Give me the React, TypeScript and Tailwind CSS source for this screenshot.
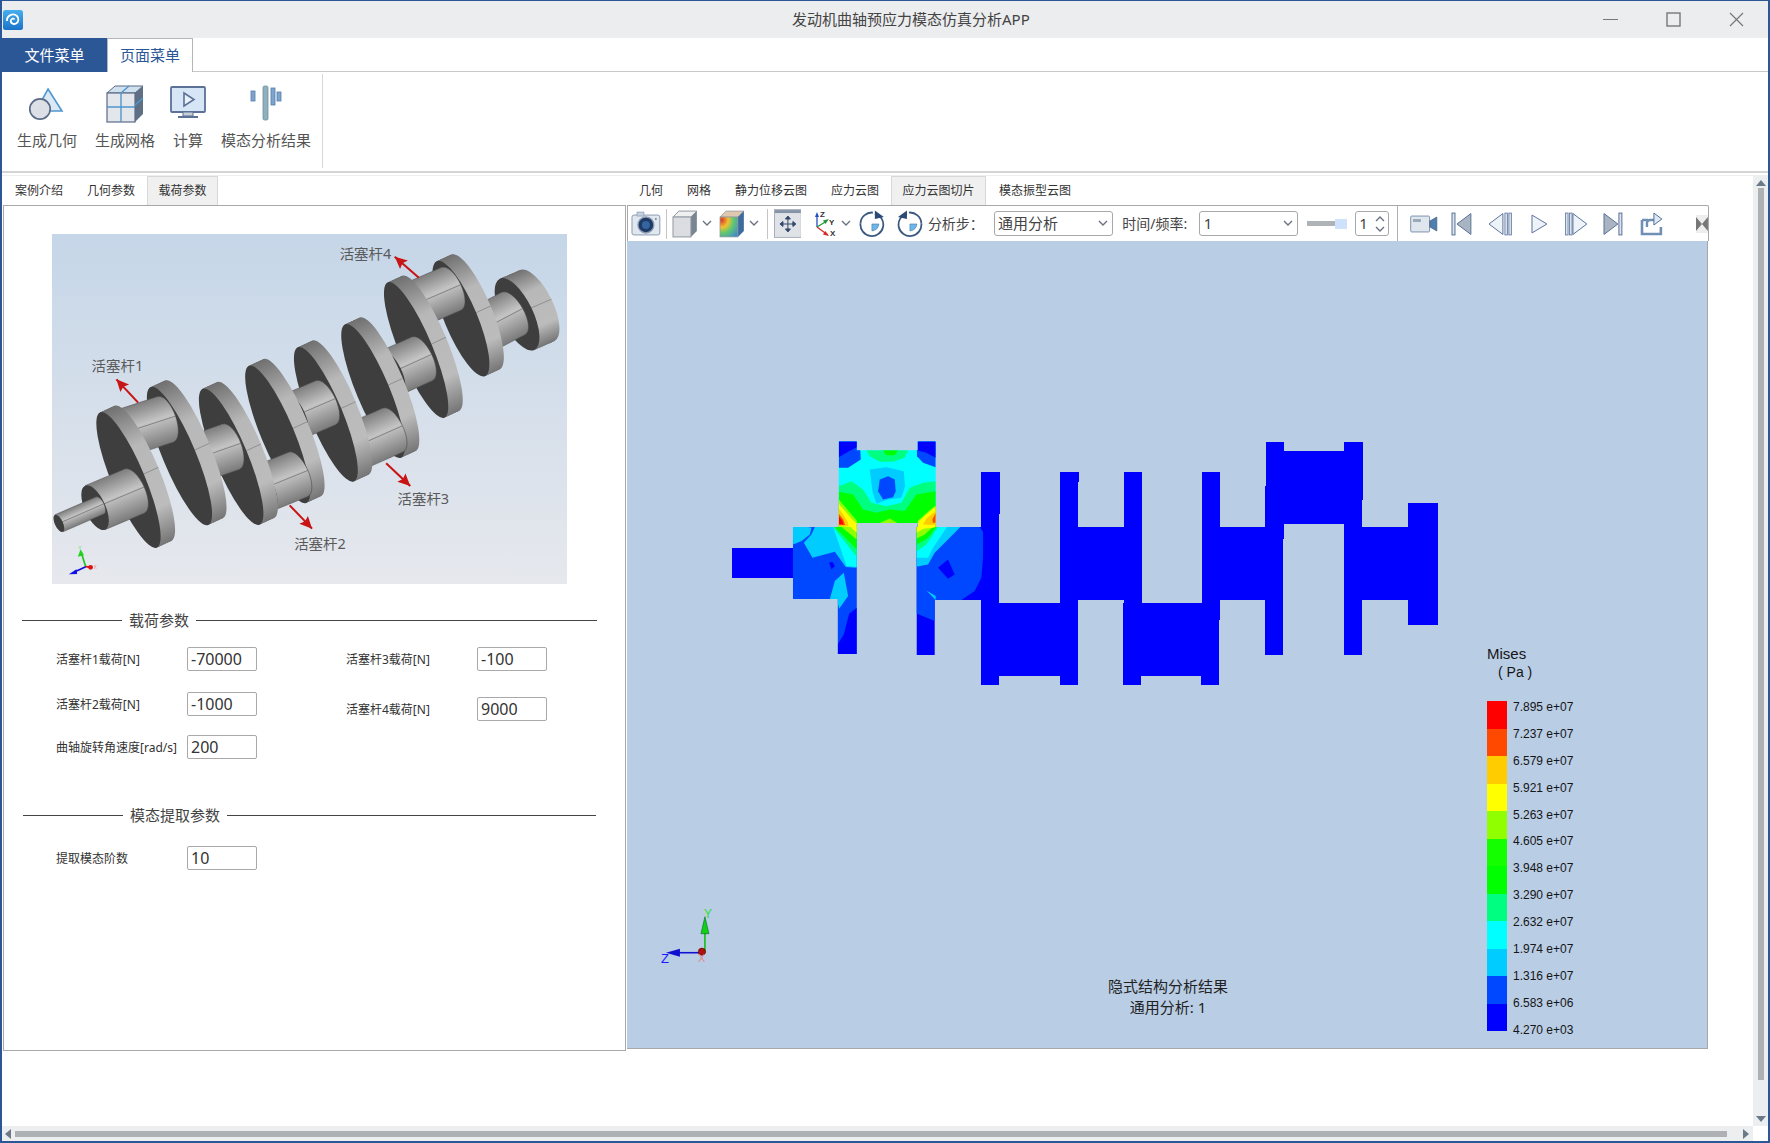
import React from "react";

const cls = "[font-family:'Noto_Sans','Noto_Sans_CJK_SC',sans-serif]";

const Chevron = ({ c = "#6b7380" }: { c?: string }) => (
  <svg width="10" height="7" viewBox="0 0 10 7"><path d="M1 1l4 4 4-4" fill="none" stroke={c} strokeWidth="1.4" /></svg>
);

function Cyl({ a, b, r }: { a: number[]; b: number[]; r: number }) {
  const ang = (Math.atan2(b[1] - a[1], b[0] - a[0]) * 180) / Math.PI;
  const L = Math.hypot(b[0] - a[0], b[1] - a[1]);
  return (
    <g transform={`translate(${a[0]} ${a[1]}) rotate(${ang})`}>
      <ellipse cx={L} cy={0} rx={r * 0.42} ry={r} fill="url(#cyl)" stroke="#444" strokeWidth="1.5" />
      <rect x={0} y={-r} width={L} height={2 * r} fill="url(#cyl)" />
      <line x1={0} y1={-r} x2={L} y2={-r} stroke="#555" strokeWidth="1.5" />
      <line x1={0} y1={r} x2={L} y2={r} stroke="#555" strokeWidth="1.5" />
      <line x1={0} y1={0} x2={L + r * 0.42} y2={0} stroke="#555" strokeWidth="1.5" />
      <ellipse cx={0} cy={0} rx={r * 0.42} ry={r} fill="#3e3e3e" />
    </g>
  );
}

function Disc({ c, maj, min = 48, off = [42, -20], ang = 68 }: { c: number[]; maj: number; min?: number; off?: number[]; ang?: number }) {
  const steps = Array.from({ length: 16 }, (_, i) => (i + 1) / 16).reverse();
  const rad = ((ang - 90) * Math.PI) / 180;
  const sx = c[0] + Math.cos(rad) * min;
  const sy = c[1] + Math.sin(rad) * min;
  return (
    <g>
      {steps.map((t) => (
        <ellipse
          key={t}
          cx={0}
          cy={0}
          rx={maj}
          ry={min}
          fill="url(#band)"
          transform={`translate(${c[0] + off[0] * t} ${c[1] + off[1] * t}) rotate(${ang})`}
        />
      ))}
      <ellipse cx={0} cy={0} rx={maj} ry={min} fill="#3e3e3e" transform={`translate(${c[0]} ${c[1]}) rotate(${ang})`} />
      <line x1={sx} y1={sy} x2={sx + off[0]} y2={sy + off[1]} stroke="#666" strokeWidth="1.5" />
    </g>
  );
}

function Crankshaft() {
  const labels: [string, number, number][] = [
    ["活塞杆1", 150, 435],
    ["活塞杆2", 738, 969],
    ["活塞杆3", 1038, 835],
    ["活塞杆4", 870, 100],
  ];
  const arrows = [
    [285, 530, 222, 460],
    [725, 838, 790, 908],
    [1005, 712, 1075, 780],
    [1100, 155, 1030, 92],
  ];
  return (
    <svg width="515" height="350" viewBox="35 24 1495 1050" preserveAspectRatio="none" className="block">
      <defs>
        <linearGradient id="bg" x1="0" y1="0" x2="0" y2="1">
          <stop offset="0" stopColor="#c5d6e8" />
          <stop offset="1" stopColor="#e6e8ed" />
        </linearGradient>
        <linearGradient id="cyl" x1="0" y1="0" x2="0" y2="1">
          <stop offset="0" stopColor="#7e7e7e" />
          <stop offset="0.45" stopColor="#c4c4c4" />
          <stop offset="1" stopColor="#7a7a7a" />
        </linearGradient>
        <linearGradient id="band" x1="0" y1="0" x2="1" y2="0">
          <stop offset="0" stopColor="#707070" />
          <stop offset="0.3" stopColor="#b8b8b8" />
          <stop offset="0.75" stopColor="#bcbcbc" />
          <stop offset="1" stopColor="#757575" />
        </linearGradient>
      </defs>
      <rect x="35" y="24" width="1495" height="1050" fill="url(#bg)" />
      <Disc c={[1385, 265]} maj={118} min={46} off={[58, -26]} ang={65} />
      <Cyl a={[1290, 308]} b={[1375, 262]} r={72} />
      <Disc c={[1222, 278]} maj={186} />
      <Cyl a={[1090, 235]} b={[1195, 188]} r={70} />
      <Disc c={[1092, 372]} maj={219} />
      <Cyl a={[1020, 440]} b={[1110, 398]} r={72} />
      <Disc c={[967, 495]} maj={216} />
      <Cyl a={[920, 660]} b={[1025, 612]} r={72} />
      <Disc c={[830, 565]} maj={217} />
      <Cyl a={[740, 570]} b={[830, 530]} r={72} />
      <Disc c={[690, 625]} maj={222} />
      <Cyl a={[650, 787]} b={[750, 745]} r={72} />
      <Disc c={[555, 692]} maj={220} />
      <Cyl a={[450, 700]} b={[555, 662]} r={72} />
      <Disc c={[405, 690]} maj={223} />
      <Cyl a={[240, 622]} b={[365, 580]} r={72} />
      <Disc c={[257, 762]} maj={219} />
      <Cyl a={[160, 845]} b={[275, 795]} r={72} />
      <Cyl a={[55, 892]} b={[175, 838]} r={28} />
      {arrows.map(([x1, y1, x2, y2], i) => {
        const ang = (Math.atan2(y2 - y1, x2 - x1) * 180) / Math.PI;
        return (
          <g key={i}>
            <line x1={x1} y1={y1} x2={x2} y2={y2} stroke="#c81414" strokeWidth="6" />
            <polygon points="0,0 -36,-17 -30,0 -36,17" fill="#c81414" transform={`translate(${x2} ${y2}) rotate(${ang})`} />
          </g>
        );
      })}
      {labels.map(([t, x, y]) => (
        <text key={t} x={x} y={y} fontSize="42" fill="#5a5a5a" fontFamily="'Noto Sans','Noto Sans CJK SC',sans-serif">{t}</text>
      ))}
      <line x1="133" y1="1022" x2="120" y2="980" stroke="#22c422" strokeWidth="5" />
      <polygon points="118,970 110,992 128,988" fill="#22d022" />
      <line x1="133" y1="1022" x2="100" y2="1038" stroke="#1010e0" strokeWidth="5" />
      <polygon points="84,1045 106,1030 108,1044" fill="#1010e0" />
      <line x1="133" y1="1022" x2="150" y2="1024" stroke="#e01010" strokeWidth="5" />
      <circle cx="147" cy="1024" r="7" fill="#e01010" />
      <text x="112" y="972" fontSize="14" fill="#66dd66">Y</text>
      <text x="156" y="1030" fontSize="14" fill="#e88">X</text>
    </svg>
  );
}

const bluePage: number[][] = [
  [732, 547, 62, 30],
  [981, 471, 19, 42],
  [981, 513, 18, 171],
  [999, 602, 61, 73],
  [1060, 471, 19, 10],
  [1060, 481, 18, 203],
  [1078, 526, 46, 73],
  [1124, 471, 18, 131],
  [1123, 602, 18, 82],
  [1141, 602, 61, 73],
  [1202, 602, 18, 82],
  [1203, 471, 18, 148],
  [1221, 526, 45, 73],
  [1266, 485, 18, 169],
  [1267, 441, 18, 97],
  [1285, 450, 60, 73],
  [1345, 441, 19, 58],
  [1345, 499, 18, 155],
  [1363, 526, 46, 73],
  [1409, 502, 30, 122],
];

const poly = (fill: string, points: string) => <polygon fill={fill} points={points} />;

function Contours() {
  const B = "#0000ff", B2 = "#0048ff", S = "#00ccff", C = "#00ffff", G2 = "#00ff80", G = "#00ff00", L = "#90ff00", Y = "#ffff00", A = "#ffcc00", O = "#ff4800", R = "#ff0000";
  return (
    <svg viewBox="627 240 1081 807" className="absolute inset-0 w-full h-full">
      <defs>
        <clipPath id="fem" shapeRendering="crispEdges">
          <rect x="357" y="57" width="291" height="219" />
          <rect x="357" y="30" width="54" height="258" />
          <rect x="594" y="30" width="54" height="258" />
          <rect x="219" y="288" width="192" height="216" />
          <rect x="354" y="504" width="57" height="165" />
          <rect x="591" y="288" width="200" height="219" />
          <rect x="591" y="507" width="54" height="165" />
        </clipPath>
      </defs>
      <g shapeRendering="crispEdges">
        {bluePage.map(([x, y, w, h], i) => (
          <rect key={i} x={x} y={y} width={w} height={h} fill={B} />
        ))}
      </g>
      <g transform="translate(720 430) scale(0.33333)" clipPath="url(#fem)">
        <rect x="200" y="20" width="600" height="260" fill={C} />
        {poly(B2, "357,30 420,30 423,85 400,100 385,110 357,110")}
        {poly(B2, "648,30 590,30 592,75 610,95 648,108")}
        {poly(B, "357,30 411,30 411,48 385,62 357,78")}
        {poly(B, "648,30 594,30 594,58 618,64 648,80")}
        {poly(G2, "440,57 565,57 555,80 520,92 480,92 450,75")}
        {poly(G, "490,57 535,57 525,72 500,72")}
        {poly(S, "450,115 500,108 552,120 556,165 545,200 505,205 470,218 458,180")}
        {poly(B2, "480,145 505,135 525,145 528,180 520,198 490,205 475,180")}
        {poly(G2, "357,165 395,150 430,175 455,215 500,225 545,215 570,170 610,155 648,150 648,280 357,280")}
        {poly(G, "357,182 400,190 430,235 470,245 510,235 555,240 590,190 648,180 648,280 357,280")}
        {poly(L, "470,280 510,262 540,280")}
        <rect x="200" y="280" width="220" height="400" fill={B2} />
        <rect x="585" y="280" width="230" height="400" fill={B} />
        {poly(S, "219,288 252,285 275,290 270,310 245,330 220,340")}
        {poly(S, "285,288 345,288 411,350 411,410 378,408 345,362 278,380 252,335 275,310")}
        {poly(C, "340,288 360,288 411,330 411,408 380,405 370,375")}
        {poly(G2, "340,288 411,288 411,378 385,345")}
        {poly(G, "345,288 411,288 411,355")}
        {poly(B, "328,395 338,392 345,405 335,415")}
        {poly(S, "372,425 385,495 358,533 352,508 330,505 345,450")}
        {poly(B, "411,530 388,548 372,610 354,640 354,669 411,669")}
        {poly(B2, "585,288 780,288 792,305 790,380 785,440 765,480 725,507 645,507 645,570 585,545")}
        {poly(S, "585,288 722,288 690,320 645,365 625,400 585,408")}
        {poly(C, "585,288 682,288 640,350 625,380 585,380")}
        {poly(G2, "585,288 655,288 620,340 585,365")}
        {poly(G, "585,288 650,288 625,320 585,345")}
        {poly(L, "585,288 640,288 615,310 585,325")}
        {poly(Y, "585,288 620,288 585,308")}
        {poly(B, "655,410 685,385 705,430 685,443")}
        {poly(S, "620,478 648,495 648,507")}
        {poly(L, "357,205 385,238 411,268 411,325 365,288 340,288 340,276")}
        {poly(Y, "357,218 380,245 400,268 411,276 411,305 392,288 355,285")}
        {poly(A, "357,232 370,250 385,275 385,285 350,285")}
        {poly(O, "357,248 370,265 376,282 357,282")}
        {poly(R, "357,256 368,270 370,280 357,278")}
        {poly(L, "648,222 615,250 594,270 594,288 660,288 648,276")}
        {poly(Y, "648,226 620,250 600,268 594,276 594,295 640,290 648,288")}
        {poly(A, "648,240 620,262 610,280 648,282")}
        {poly(O, "648,246 638,265 640,276 648,274")}
      </g>
      <g>
        <line x1="705" y1="952" x2="705" y2="925" stroke="#12c012" strokeWidth="1.6" />
        <polygon points="705,916 701,933 709,933" fill="#12d012" stroke="#063" strokeWidth=".6" />
        <line x1="701" y1="952" x2="676" y2="952" stroke="#1010d0" strokeWidth="1.6" />
        <polygon points="666,952 680,948 680,956" fill="#1010d0" />
        <circle cx="702" cy="951" r="3.6" fill="#b01010" stroke="#500" strokeWidth=".6" />
        <text x="704" y="917" fontSize="12" fill="#33dd33" fontFamily="'Liberation Sans',sans-serif">Y</text>
        <text x="661" y="962" fontSize="13" fill="#1a1aff" fontFamily="'Liberation Sans',sans-serif">Z</text>
        <text x="698" y="961" fontSize="11" fill="#e08a90" fontFamily="'Liberation Sans',sans-serif">X</text>
      </g>
    </svg>
  );
}

const LEGEND = ["#ff0000", "#ff4800", "#ffcc00", "#ffff00", "#90ff00", "#14ff00", "#00ff00", "#00ff80", "#00ffff", "#00ccff", "#0048ff", "#0000ff"];
const LABELS = [
  ["7.895", "+07"], ["7.237", "+07"], ["6.579", "+07"], ["5.921", "+07"], ["5.263", "+07"], ["4.605", "+07"], ["3.948", "+07"],
  ["3.290", "+07"], ["2.632", "+07"], ["1.974", "+07"], ["1.316", "+07"], ["6.583", "+06"], ["4.270", "+03"],
];

function Legend() {
  return (
    <div className="absolute left-[860px] top-[404px] w-[110px] text-[#151515] [font-family:'Liberation_Sans',sans-serif]">
      <div className="text-[15px] leading-[18px] h-[18px]">Mises</div>
      <div className="text-[14px] leading-[18px] h-[18px] pl-[11px]">( Pa )</div>
      <div className="flex mt-[20px]">
        <div className="w-[20px] h-[330px] flex flex-col mt-0">
          {LEGEND.map((c) => (
            <div key={c} className="flex-1" style={{ backgroundColor: c }} />
          ))}
        </div>
        <div className="ml-[6px] -mt-[2px] flex flex-col">
          {LABELS.map(([a, b]) => (
            <div key={a} className="h-[26.9px] leading-[16px] text-[12px] whitespace-nowrap">{a} e{b}</div>
          ))}
        </div>
      </div>
    </div>
  );
}

function Field({ label, value, mb }: { label: string; value: string; mb: string }) {
  return (
    <div className={`flex items-center h-[24px] ${mb}`}>
      <div className="w-[131px] -ml-[1px] pt-[2px] text-[12px] text-[#333] whitespace-nowrap">{label}</div>
      <input readOnly value={value} className="w-[70px] h-[24px] border border-[#a9a9a9] rounded-[2px] px-[3px] text-[16px] text-[#333] outline-none bg-white" />
    </div>
  );
}

function LegendLine({ text, lead, gap }: { text: string; lead: string; gap: string }) {
  return (
    <div className="flex items-center h-[20px]">
      <div className={`${lead} h-px bg-[#444]`} />
      <div className={`${gap} text-[15px] text-[#444] whitespace-nowrap`}>{text}</div>
      <div className="flex-1 h-px bg-[#444]" />
    </div>
  );
}

function Sep({ ml, mr }: { ml: string; mr: string }) {
  return <div className={`w-px h-[30px] bg-[#c4c4c4] ${ml} ${mr}`} />;
}

function Ribbon() {
  return (
    <div className="flex h-[99px] pl-[1px] bg-white">
      <div className="flex w-[320px] border-r border-[#d8d8d8] mt-[2px] mb-[3px]">
        <div className="w-[88px] flex flex-col items-center">
          <svg width="40" height="40" viewBox="0 0 40 40" className="mt-[10px]">
            <polygon points="21,5 35,27 9,27" fill="#dbe8f5" stroke="#4f97cf" strokeWidth="1.6" />
            <circle cx="13" cy="25" r="10.2" fill="#dcdfe6" stroke="#5b6b86" strokeWidth="1.7" />
          </svg>
          <div className="mt-[6px] text-[15px] leading-[20px] text-[#555]">生成几何</div>
        </div>
        <div className="w-[68px] flex flex-col items-center">
          <svg width="40" height="40" viewBox="0 0 40 40" className="mt-[10px]">
            <polygon points="2,9 10,2 38,2 30,9" fill="#cfe0ee" stroke="#5b6b86" strokeWidth="1" />
            <polygon points="30,9 38,2 38,30 30,38" fill="#5f7085" />
            <rect x="2" y="9" width="28" height="29" fill="#e3e6ea" stroke="#5b6b86" strokeWidth="1.2" />
            <path d="M16 9v29M2 23h28M16 9l8-7M30 21l8-7" stroke="#4f97cf" strokeWidth="1.4" fill="none" />
          </svg>
          <div className="mt-[6px] text-[15px] leading-[20px] text-[#555]">生成网格</div>
        </div>
        <div className="w-[58px] flex flex-col items-center">
          <svg width="40" height="40" viewBox="0 0 40 40" className="mt-[10px]">
            <rect x="3" y="3" width="34" height="25" rx="1" fill="#d7e6f6" stroke="#5d7196" strokeWidth="1.8" />
            <polygon points="16,9 26,15.5 16,22" fill="#e9f1fa" stroke="#5d7196" strokeWidth="1.6" />
            <rect x="15" y="28" width="10" height="4" fill="#c6ced8" stroke="#5d7196" strokeWidth="1" />
            <rect x="10" y="32" width="20" height="2" fill="#5d7196" />
          </svg>
          <div className="mt-[6px] text-[15px] leading-[20px] text-[#555]">计算</div>
        </div>
        <div className="w-[98px] flex flex-col items-center">
          <svg width="40" height="40" viewBox="0 0 40 40" className="mt-[10px]">
            <rect x="5" y="7" width="4" height="10" fill="#7da4cf" stroke="#537da8" strokeWidth=".8" />
            <rect x="17" y="2" width="5" height="34" rx="1.5" fill="#8fb0bd" stroke="#6d8f9d" strokeWidth=".8" />
            <rect x="25" y="4" width="4" height="17" fill="#7da4cf" stroke="#537da8" strokeWidth=".8" />
            <rect x="31" y="8" width="4" height="9" fill="#7da4cf" stroke="#537da8" strokeWidth=".8" />
          </svg>
          <div className="mt-[6px] text-[15px] leading-[20px] text-[#555] whitespace-nowrap">模态分析结果</div>
        </div>
      </div>
    </div>
  );
}

function Toolbar() {
  return (
    <div className="h-[36px] shrink-0 w-[1082px] border-t border-x border-[#a8a8a8] rounded-tr-[2px] flex items-center text-[14px] text-[#333] bg-white overflow-hidden">
      <svg width="30" height="25" viewBox="0 0 30 25" className="ml-[3px]">
        <rect x="1" y="4" width="28" height="20" rx="2" fill="#e1e7ef" stroke="#8b9bb2" />
        <rect x="6" y="1" width="7" height="4" fill="#c5d0dd" stroke="#8b9bb2" strokeWidth=".7" />
        <circle cx="15" cy="14" r="8" fill="#1e3a66" stroke="#8b9bb2" strokeWidth="1.4" />
        <circle cx="15" cy="14" r="4" fill="#35659e" />
        <circle cx="25" cy="8" r="1" fill="#70839c" />
      </svg>
      <Sep ml="ml-[5px]" mr="mr-[5px]" />
      <svg width="26" height="28" viewBox="0 0 26 28">
        <polygon points="1,7 7,1 25,1 19,7" fill="#f0f0f0" stroke="#9099a4" />
        <polygon points="19,7 25,1 25,21 19,27" fill="#7a8592" />
        <rect x="1" y="7" width="18" height="20" fill="#dcdde0" stroke="#9099a4" />
      </svg>
      <div className="ml-[4px] mr-[7px]"><Chevron /></div>
      <svg width="26" height="28" viewBox="0 0 26 28">
        <defs>
          <radialGradient id="cube" cx="0.1" cy="0.15" r="1.2">
            <stop offset="0" stopColor="#d93a2a" />
            <stop offset=".3" stopColor="#f2c030" />
            <stop offset=".55" stopColor="#60c870" />
            <stop offset="1" stopColor="#3a80d8" />
          </radialGradient>
        </defs>
        <polygon points="1,7 7,1 25,1 19,7" fill="#e0c8b0" stroke="#8d949d" strokeWidth=".7" />
        <polygon points="19,7 25,1 25,21 19,27" fill="#3d6c9c" />
        <rect x="1" y="7" width="18" height="20" fill="url(#cube)" stroke="#8d949d" strokeWidth=".7" />
      </svg>
      <div className="ml-[4px] mr-[8px]"><Chevron /></div>
      <Sep ml="ml-0" mr="mr-[6px]" />
      <svg width="28" height="29" viewBox="0 0 28 29">
        <rect x=".5" y=".5" width="27" height="28" fill="#dfe3e8" stroke="#a8b0ba" />
        <rect x="1" y="1" width="26" height="3" fill="#8593a6" />
        <path d="M14 8v14M7 15h14M14 7l-2.500 3h5zM14 23l-2.500-3h5zM6 15l3-2.500v5zM22 15l-3-2.500v5z" fill="#33486a" stroke="#33486a" strokeWidth="1" />
      </svg>
      <svg width="24" height="28" viewBox="0 0 24 28" className="ml-[13px]">
        <path d="M3 17V5" stroke="#1f50c0" strokeWidth="1.3" />
        <polygon points="3,2 1,7 5,7" fill="#1f50c0" />
        <path d="M3 17l10-6" stroke="#1e9a3a" strokeWidth="1.3" />
        <polygon points="15,9 9,10.500 11.500,14" fill="#1e9a3a" />
        <path d="M3 17l11 8" stroke="#d82a2a" strokeWidth="1.3" />
        <polygon points="15,26 9,24.500 11.500,21" fill="#d82a2a" />
        <text x="6" y="7" fontSize="8" fill="#333" fontFamily="'Liberation Sans',sans-serif" fontWeight="bold">Z</text>
        <text x="15" y="15" fontSize="8" fill="#333" fontFamily="'Liberation Sans',sans-serif" fontWeight="bold">Y</text>
        <text x="16" y="26" fontSize="8" fill="#333" fontFamily="'Liberation Sans',sans-serif" fontWeight="bold">X</text>
      </svg>
      <div className="ml-[3px] mr-[8px]"><Chevron /></div>
      <svg width="26" height="27" viewBox="0 0 26 27">
        <path d="M16 3.500a11.500 11.500 0 1 1-14.500 10" fill="none" stroke="#3c5a80" strokeWidth="1.8" />
        <path d="M1.500 13.500A11.500 11.500 0 0 1 14 2.500" fill="none" stroke="#3c5a80" strokeWidth="1.8" />
        <polygon points="25,7 16,0.500 16,9" fill="#2c4a78" />
        <path d="M13 14h7a8 8 0 0 1-7 7z" fill="#6db8e8" stroke="#3c78a8" strokeWidth=".6" />
      </svg>
      <svg width="26" height="27" viewBox="0 0 26 27" className="ml-[12px]">
        <path d="M10 3.500a11.500 11.500 0 1 0 14.500 10" fill="none" stroke="#3c5a80" strokeWidth="1.8" />
        <path d="M24.500 13.500A11.500 11.500 0 0 0 12 2.500" fill="none" stroke="#3c5a80" strokeWidth="1.8" />
        <polygon points="1,7 10,0.500 10,9" fill="#2c4a78" />
        <path d="M13 14h7a8 8 0 0 1-7 7z" fill="#6db8e8" stroke="#3c78a8" strokeWidth=".6" />
      </svg>
      <div className="ml-[5px] w-[55px] whitespace-nowrap text-[#444]">分析步：</div>
      <div className="ml-[11px] w-[120px] h-[25px] border border-[#a8a8a8] rounded-[3px] flex items-center justify-between pl-[3px] pr-[4px] text-[15px] text-[#444]">
        <span>通用分析</span>
        <Chevron />
      </div>
      <div className="ml-[9px] w-[70px] whitespace-nowrap text-[#444]">时间/频率:</div>
      <div className="ml-[7px] w-[100px] h-[25px] border border-[#a8a8a8] rounded-[3px] flex items-center justify-between pl-[4px] pr-[4px] text-[15px] text-[#444]">
        <span>1</span>
        <Chevron />
      </div>
      <div className="ml-[9px] w-[40px] h-[10px] flex items-center">
        <div className="w-[28px] h-[5px] bg-[#aeb3b7]" />
        <div className="w-[12px] h-[10px] bg-[#cfe2fb]" />
      </div>
      <div className="ml-[8px] w-[34px] h-[25px] border border-[#a8a8a8] rounded-[3px] flex items-center justify-between pl-[3px] pr-[3px] text-[15px] text-[#444]">
        <span>1</span>
        <div className="flex flex-col gap-[4px]">
          <div className="rotate-180"><Chevron /></div>
          <Chevron />
        </div>
      </div>
      <div className="w-px h-[36px] bg-[#b0b0b0] ml-[8px]" />
      <svg width="28" height="18" viewBox="0 0 28 18" className="ml-[12px]">
        <rect x=".7" y="1" width="19" height="16" rx="1" fill="#dfe6ee" stroke="#7d93b0" />
        <rect x="3" y="4" width="8" height="3" fill="#9aa8ba" />
        <path d="M20 6l7-4v14l-7-4z" fill="#4f7fae" stroke="#3f5d85" strokeWidth=".7" />
      </svg>
      <svg width="21" height="24" viewBox="0 0 21 24" className="ml-[13px]">
        <rect x="1" y="1" width="3" height="22" fill="#d9e2ee" stroke="#5a7398" />
        <polygon points="20,1.500 20,22.500 6,12" fill="#a9b4c2" stroke="#5a7398" />
      </svg>
      <svg width="24" height="24" viewBox="0 0 24 24" className="ml-[16px]">
        <polygon points="15,1.500 15,22.500 1,12" fill="#eef3fa" stroke="#5a7398" />
        <rect x="17" y="1" width="2.500" height="22" fill="#d9e2ee" stroke="#5a7398" strokeWidth=".8" />
        <rect x="21" y="1" width="2.500" height="22" fill="#d9e2ee" stroke="#5a7398" strokeWidth=".8" />
      </svg>
      <svg width="17" height="20" viewBox="0 0 17 20" className="ml-[19px]">
        <polygon points="1,1 16,10 1,19" fill="#eef3fa" stroke="#5a7398" />
      </svg>
      <svg width="23" height="24" viewBox="0 0 23 24" className="ml-[17px]">
        <rect x=".6" y="1" width="2.500" height="22" fill="#d9e2ee" stroke="#5a7398" strokeWidth=".8" />
        <rect x="4.600" y="1" width="2.500" height="22" fill="#d9e2ee" stroke="#5a7398" strokeWidth=".8" />
        <polygon points="8,1.500 8,22.500 22,12" fill="#eef3fa" stroke="#5a7398" />
      </svg>
      <svg width="20" height="24" viewBox="0 0 20 24" className="ml-[16px]">
        <polygon points="1,1.500 1,22.500 15,12" fill="#a9b4c2" stroke="#5a7398" />
        <rect x="16" y="1" width="3" height="22" fill="#d9e2ee" stroke="#5a7398" />
      </svg>
      <svg width="23" height="24" viewBox="0 0 23 24" className="ml-[17px]">
        <path d="M2 8h6M2 8v14h19v-7" fill="none" stroke="#6f8fb5" strokeWidth="2.6" />
        <path d="M7 15v-4a3 3 0 0 1 3-3h5" fill="none" stroke="#6f8fb5" strokeWidth="2.4" />
        <polygon points="14,1 22,7 14,13" fill="#dfe9f5" stroke="#4f6f98" />
      </svg>
      <svg width="12" height="18" viewBox="0 0 12 18" className="ml-[33px]">
        <rect x="0" y="0" width="12" height="18" fill="#eeeeee" />
        <path d="M0 2l6 7-6 7zM12 2L6 9l6 7z" fill="#777" />
      </svg>
    </div>
  );
}

export default function App() {
  return (
    <div className={`${cls} w-[1770px] h-[1143px] bg-white border-x-2 border-t border-b-2 border-[#2b5797] flex flex-col overflow-hidden`}>
      <div className="h-[37px] shrink-0 bg-[#ecedef] flex items-center relative">
        <svg width="20" height="20" viewBox="0 0 20 20" className="ml-[1px]">
          <defs>
            <linearGradient id="logo" x1="0" y1="0" x2="0" y2="1">
              <stop offset="0" stopColor="#46b0ee" />
              <stop offset="1" stopColor="#1b72c8" />
            </linearGradient>
          </defs>
          <rect width="20" height="20" rx="2.500" fill="url(#logo)" />
          <path d="M4 11a6 6 0 0 1 10-5c2 2 2 6-1 7.500-3 1.500-6-1-5-3.500 .6-1.600 3-2 3.500-.5" fill="none" stroke="#fff" strokeWidth="1.800" />
        </svg>
        <div className="ml-[769px] text-[15px] text-[#444] whitespace-nowrap">发动机曲轴预应力模态仿真分析APP</div>
        <svg width="15" height="15" viewBox="0 0 15 15" className="ml-[573px]"><path d="M0 7.500h15" stroke="#777" strokeWidth="1" /></svg>
        <svg width="15" height="15" viewBox="0 0 15 15" className="ml-[48px]"><rect x="1" y="1" width="13" height="13" fill="none" stroke="#777" strokeWidth="1.400" /></svg>
        <svg width="15" height="15" viewBox="0 0 15 15" className="ml-[48px]"><path d="M1 1l13 13M14 1L1 14" stroke="#777" strokeWidth="1.200" /></svg>
      </div>

      <div className="h-[34px] shrink-0 flex border-b border-[#c8c8c8] bg-white">
        <div className="w-[105px] h-[34px] bg-[#2b5797] text-white text-[15px] flex items-center justify-center">文件菜单</div>
        <div className="w-[86px] h-[34px] border-x border-t border-[#b5b5b5] bg-white text-[#2b5797] text-[15px] flex items-center justify-center">页面菜单</div>
      </div>

      <Ribbon />

      <div className="h-[5px] shrink-0 border-t-2 border-[#d4d4d4] border-b border-b-[#eeeeee]" />

      <div className="flex-1 flex min-h-0">
        <div className="flex-1 flex min-w-0 pl-[1px]">
          <div className="w-[623px] shrink-0 flex flex-col">
            <div className="h-[29px] shrink-0 flex text-[12px] text-[#333]">
              <div className="w-[72px] flex items-center justify-center">案例介绍</div>
              <div className="w-[72px] flex items-center justify-center">几何参数</div>
              <div className="w-[71px] flex items-center justify-center bg-[#f0f0f0] border border-b-0 border-[#d8d8d8]">载荷参数</div>
            </div>
            <div className="h-[846px] border border-[#a8a8a8] pt-[28px] flex flex-col">
              <div className="pl-[48px]"><Crankshaft /></div>
              <div className="mt-[26px] pl-[18px] pr-[28px]">
                <LegendLine text="载荷参数" lead="w-[100px]" gap="px-[7px]" />
              </div>
              <div className="flex mt-[17px] pl-[53px]">
                <div className="w-[290px] flex flex-col">
                  <Field label="活塞杆1载荷[N]" value="-70000" mb="mb-[21px]" />
                  <Field label="活塞杆2载荷[N]" value="-1000" mb="mb-[19px]" />
                  <Field label="曲轴旋转角速度[rad/s]" value="200" mb="mb-0" />
                </div>
                <div className="flex flex-col">
                  <Field label="活塞杆3载荷[N]" value="-100" mb="mb-[26px]" />
                  <Field label="活塞杆4载荷[N]" value="9000" mb="mb-0" />
                </div>
              </div>
              <div className="mt-[46px] pl-[19px] pr-[29px]">
                <LegendLine text="模态提取参数" lead="w-[100px]" gap="px-[7px]" />
              </div>
              <div className="mt-[21px] pl-[53px]">
                <Field label="提取模态阶数" value="10" mb="mb-0" />
              </div>
            </div>
          </div>

          <div className="w-[1082px] ml-[1px] shrink-0 flex flex-col">
            <div className="h-[29px] shrink-0 flex text-[12px] text-[#333]">
              <div className="w-[60px] pl-[12px] flex items-center">几何</div>
              <div className="w-[48px] flex items-center">网格</div>
              <div className="w-[96px] flex items-center">静力位移云图</div>
              <div className="w-[60px] flex items-center">应力云图</div>
              <div className="w-[95px] flex items-center justify-center bg-[#f0f0f0] border border-b-0 border-[#d8d8d8]">应力云图切片</div>
              <div className="ml-[13px] flex items-center">模态振型云图</div>
            </div>
            <Toolbar />
            <div className="relative w-[1081px] h-[808px] shrink-0 bg-[#b9cde5] border-b border-r border-[#a8a8a8]">
              <Contours />
              <Legend />
              <div className="absolute left-[441px] top-[735px] w-[200px] text-center text-[15px] leading-[21px] text-[#222]">
                <div>隐式结构分析结果</div>
                <div>通用分析: 1</div>
              </div>
            </div>
          </div>
        </div>

        <div className="w-[15px] shrink-0 bg-[#eceef0] flex flex-col items-center">
          <svg width="10" height="6" viewBox="0 0 10 6" className="mt-[4px]"><polygon points="5,0 10,6 0,6" fill="#6a7a88" /></svg>
          <div className="w-[6px] flex-1 bg-[#adb1b4] mt-[2px]" />
          <div className="flex-[0_0_36px]" />
          <svg width="10" height="6" viewBox="0 0 10 6" className="mb-[4px]"><polygon points="5,6 10,0 0,0" fill="#6a7a88" /></svg>
        </div>
      </div>

      <div className="h-[15px] shrink-0 flex items-center">
        <div className="flex-1 h-[15px] bg-[#eceef0] flex items-center">
          <svg width="6" height="10" viewBox="0 0 6 10" className="ml-[3px]"><polygon points="0,5 6,0 6,10" fill="#6a7a88" /></svg>
          <div className="w-[1712px] h-[6px] bg-[#adb1b4] ml-[4px]" />
          <svg width="6" height="10" viewBox="0 0 6 10" className="ml-[16px]"><polygon points="6,5 0,0 0,10" fill="#6a7a88" /></svg>
        </div>
        <div className="w-[15px] h-[15px] bg-white" />
      </div>
    </div>
  );
}
